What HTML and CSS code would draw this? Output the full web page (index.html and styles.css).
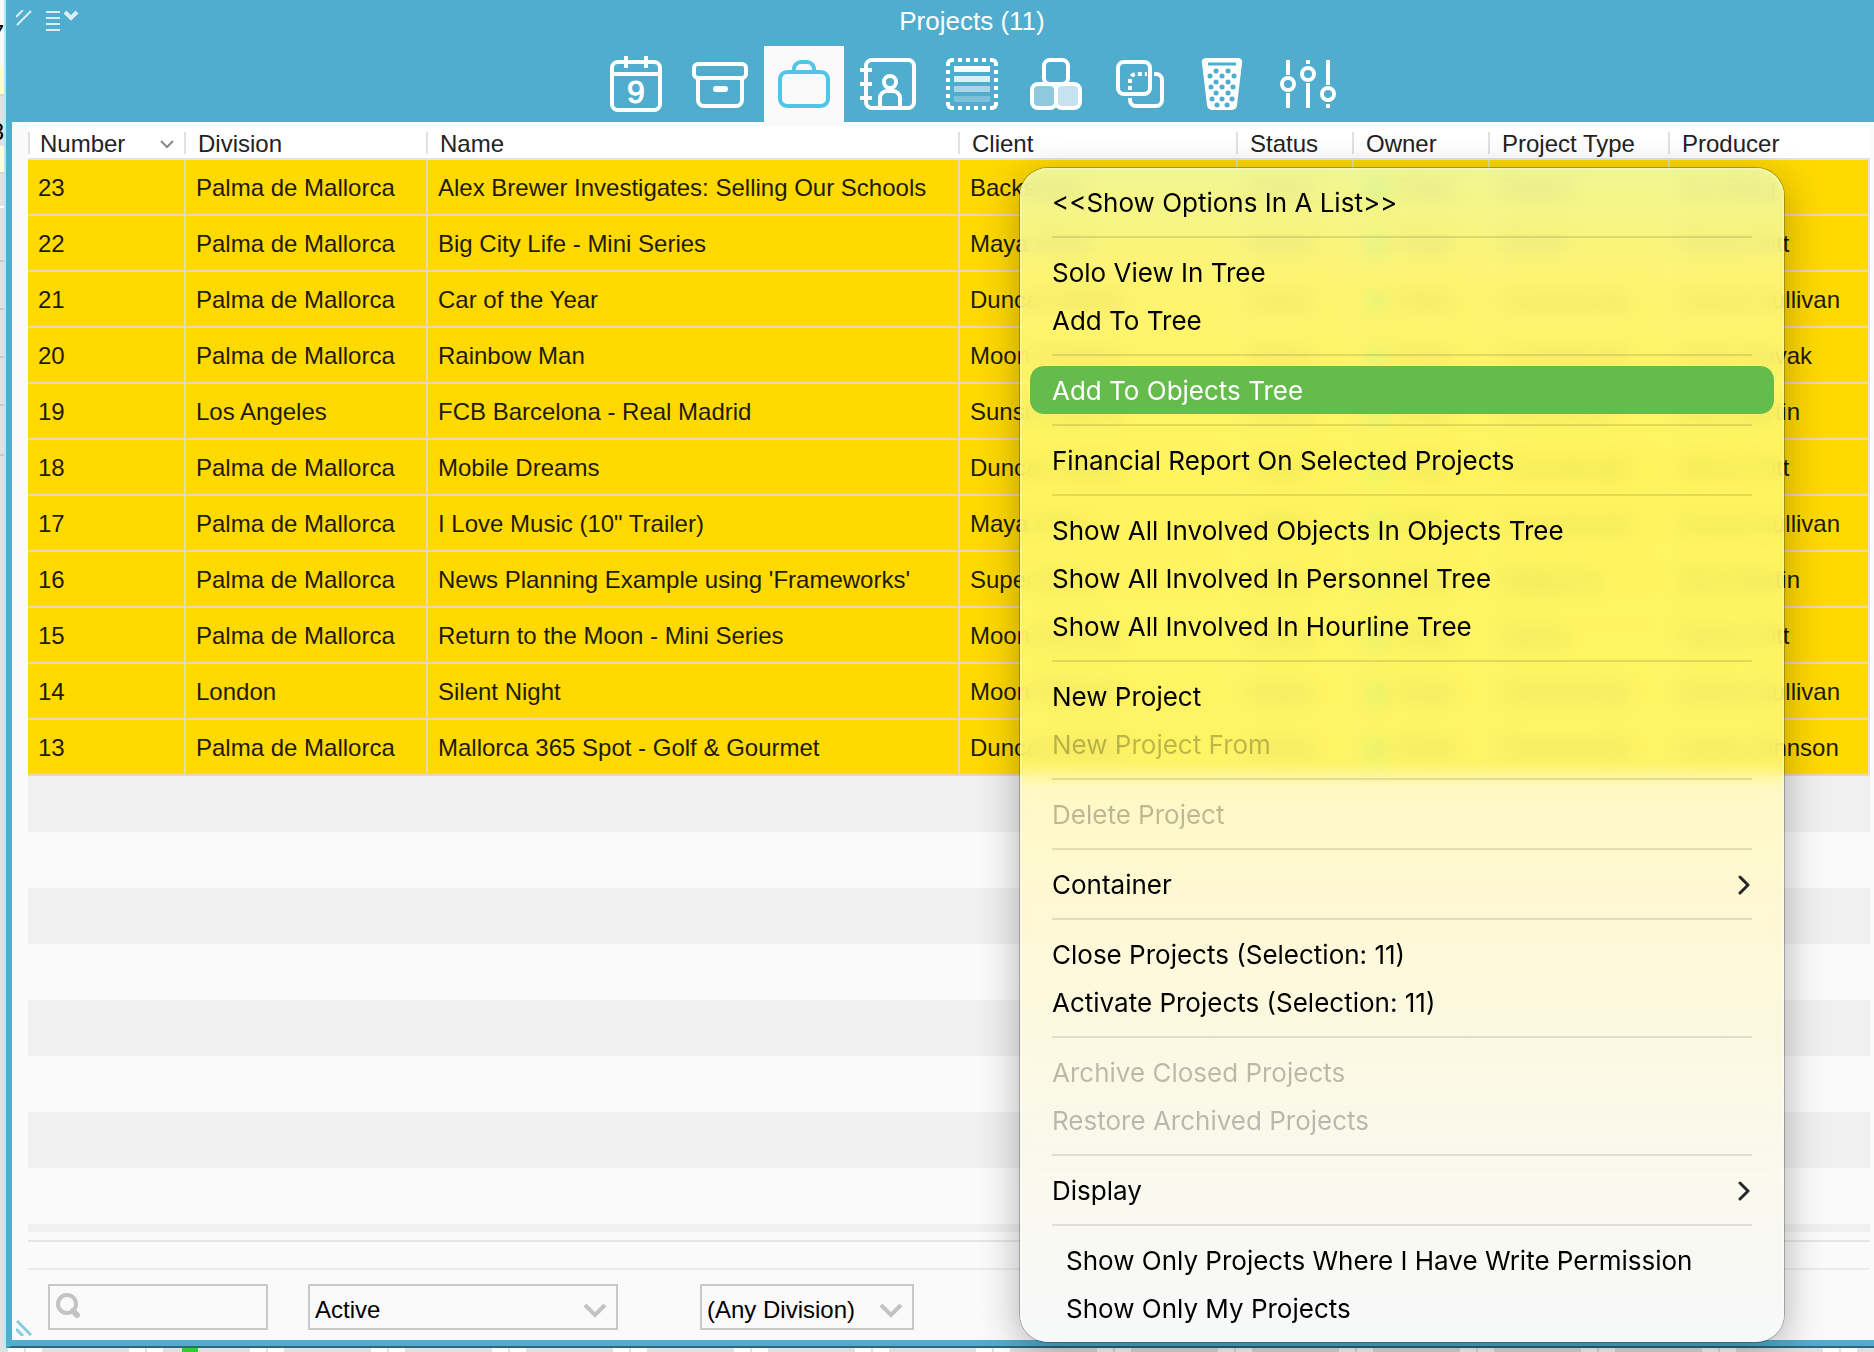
FILE: index.html
```
<!DOCTYPE html>
<html lang="en">
  <head>
    <meta charset="UTF-8" />
    <meta name="viewport" content="width=device-width, initial-scale=1.0" />
    <title>Projects (11)</title>
    <link rel="stylesheet" href="styles.css">
  </head>
  <body>
    <div class="desktop">
      <aside class="ruler"><span>7</span><span>8</span></aside>

      <main class="window">
        <header class="titlebar">
          <div class="tools">
            <button aria-label="Resize">
              <svg width="16" height="16" viewBox="0 0 16 16"><path d="M0 7 7 0M1 15 15 1" /></svg>
            </button>
            <button aria-label="Window menu">
              <svg width="34" height="22" viewBox="0 0 34 22">
                <path d="M1 2H15M1 8H15M1 14H15M1 20H15" />
                <path class="thick" d="M20 2 26 8 32 2" />
              </svg>
            </button>
          </div>
          <div class="heading">
            <h1>Projects (11)</h1>
            <nav class="tabs">
              <button aria-label="Calendar">
                <svg viewBox="0 0 80 76">
                  <rect x="16" y="16" width="48" height="48" rx="6" />
                  <path d="M16 28H64M30 10V22M50 10V22" />
                  <text x="31" y="57">9</text>
                </svg>
              </button>
              <button aria-label="Archive">
                <svg viewBox="0 0 80 76">
                  <rect x="14" y="18" width="52" height="14" rx="4" />
                  <path d="M18 32V54a6 6 0 0 0 6 6H56a6 6 0 0 0 6-6V32" />
                  <path d="M36 43H45" stroke-width="6" stroke-linecap="round" />
                </svg>
              </button>
              <button class="active" aria-label="Projects">
                <svg viewBox="0 0 80 76">
                  <rect x="16" y="26" width="48" height="34" rx="7" />
                  <path d="M30 26V23a7 7 0 0 1 7-7h6a7 7 0 0 1 7 7V26" />
                </svg>
              </button>
              <button aria-label="Contacts">
                <svg viewBox="0 0 80 76">
                  <rect x="18" y="14" width="48" height="48" rx="6" />
                  <path d="M12 24H24M12 38H24M12 52H24" />
                  <circle cx="42" cy="36" r="6" />
                  <path d="M32 62V52a7 7 0 0 1 7-7h6a7 7 0 0 1 7 7V62" />
                </svg>
              </button>
              <button aria-label="List">
                <svg viewBox="0 0 80 76">
                  <path d="M16 20V18a4 4 0 0 1 4-4h2M58 14h2a4 4 0 0 1 4 4v2M64 56v2a4 4 0 0 1-4 4h-2M22 62h-2a4 4 0 0 1-4-4v-2" />
                  <path d="M26 14H54M26 62H54M16 24V52M64 24V52" stroke-dasharray="4 4" />
                  <path d="M22 23H58" stroke-width="6" />
                  <path d="M22 33H58" stroke-width="6" opacity=".8" />
                  <path d="M22 43H58" stroke-width="6" opacity=".5" />
                  <path d="M22 53H58" stroke-width="6" opacity=".25" />
                </svg>
              </button>
              <button aria-label="Resources">
                <svg viewBox="0 0 80 76">
                  <rect x="28" y="14" width="24" height="24" rx="6" />
                  <rect x="16" y="38" width="24" height="24" rx="6" fill="#8fc9de" />
                  <rect x="40" y="38" width="24" height="24" rx="6" fill="#c5e3ee" />
                </svg>
              </button>
              <button aria-label="Copies">
                <svg viewBox="0 0 80 76">
                  <rect x="18" y="16" width="32" height="32" rx="6" />
                  <path d="M54 28h2a6 6 0 0 1 6 6V54a6 6 0 0 1-6 6H36a6 6 0 0 1-6-6V52" />
                  <path d="M30 44V34a6 6 0 0 1 6-6H47" stroke-dasharray="4 3" />
                </svg>
              </button>
              <button aria-label="Trash">
                <svg viewBox="0 0 80 76">
                  <path d="M22 14H54a2 2 0 0 1 2 3L51 59a3 3 0 0 1-3 3H28a3 3 0 0 1-3-3L20 17a2 2 0 0 1 2-3Z" fill="#fff" />
                  <path class="hole" d="M24 18H52" />
                  <path class="dots" d="M32 25h.1M44 25h.1M26 30h.1M38 30h.1M50 30h.1M32 36h.1M44 36h.1M27 41h.1M38 41h.1M49 41h.1M32 47h.1M44 47h.1M28 53h.1M38 53h.1M48 53h.1M33 59h.1M43 59h.1" />
                </svg>
              </button>
              <button aria-label="Settings">
                <svg viewBox="0 0 80 76">
                  <path d="M20 14V29M20 47V62M40 14V18M40 37V62M60 14V39M60 58V62" />
                  <circle cx="20" cy="38" r="6" />
                  <circle cx="40" cy="28" r="6" />
                  <circle cx="60" cy="48" r="6" />
                </svg>
              </button>
            </nav>
          </div>
        </header>

        <section class="list">
          <table>
            <colgroup>
              <col class="c-number"><col class="c-division"><col class="c-name"><col class="c-client">
              <col class="c-status"><col class="c-owner"><col class="c-type"><col>
            </colgroup>
            <thead>
              <tr>
                <th>Number
                  <svg class="sort" width="14" height="9" viewBox="0 0 14 9"><path d="M1 1 7 7 13 1" /></svg>
                </th>
                <th>Division</th><th>Name</th><th>Client</th><th>Status</th><th>Owner</th><th>Project Type</th><th>Producer</th>
              </tr>
            </thead>
            <tbody id="rows"></tbody>
          </table>
          <div class="stripes"></div>
        </section>

        <div class="status"></div>

        <form class="filters">
          <label class="field search">
            <svg width="26" height="28" viewBox="0 0 26 28"><circle cx="12" cy="12" r="9" /><path class="handle" d="M18 19 22 23" /></svg>
            <input type="text" aria-label="Search">
          </label>
          <label class="field state">
            <select aria-label="State"><option>Active</option><option>Closed</option></select>
            <svg class="arrow" width="24" height="16" viewBox="0 0 24 16"><path d="M2 2 12 12 22 2" /></svg>
          </label>
          <label class="field division">
            <select aria-label="Division"><option>(Any Division)</option><option>Palma de Mallorca</option><option>London</option></select>
            <svg class="arrow" width="24" height="16" viewBox="0 0 24 16"><path d="M2 2 12 12 22 2" /></svg>
          </label>
        </form>
        <svg class="grip" width="16" height="16" viewBox="0 0 16 16"><path d="M1 1 15 15M0 9 7 16" /></svg>
      </main>
    </div>
    <div class="timeline"></div>

    <div class="menu" role="menu">
      <button role="menuitem">&lt;&lt;Show Options In A List&gt;&gt;</button>
      <hr>
      <button role="menuitem">Solo View In Tree</button>
      <button role="menuitem">Add To Tree</button>
      <hr>
      <button role="menuitem" class="selected">Add To Objects Tree</button>
      <hr>
      <button role="menuitem">Financial Report On Selected Projects</button>
      <hr>
      <button role="menuitem">Show All Involved Objects In Objects Tree</button>
      <button role="menuitem">Show All Involved In Personnel Tree</button>
      <button role="menuitem">Show All Involved In Hourline Tree</button>
      <hr>
      <button role="menuitem">New Project</button>
      <button role="menuitem" disabled>New Project From</button>
      <hr>
      <button role="menuitem" disabled>Delete Project</button>
      <hr>
      <button role="menuitem">Container
        <svg width="16" height="22" viewBox="0 0 16 22"><path d="M4 4 12 12 4 20" /></svg>
      </button>
      <hr>
      <button role="menuitem">Close Projects (Selection: 11)</button>
      <button role="menuitem">Activate Projects (Selection: 11)</button>
      <hr>
      <button role="menuitem" disabled>Archive Closed Projects</button>
      <button role="menuitem" disabled>Restore Archived Projects</button>
      <hr>
      <button role="menuitem">Display
        <svg width="16" height="22" viewBox="0 0 16 22"><path d="M4 4 12 12 4 20" /></svg>
      </button>
      <hr>
      <button role="menuitem" class="indent">Show Only Projects Where I Have Write Permission</button>
      <button role="menuitem" class="indent">Show Only My Projects</button>
    </div>

    <script src="script.js"></script>
  </body>
</html>
```
FILE: styles.css
```
:root {
  --blue: #50adcd;
  --panel: #fafafa;
  --yellow: #ffd900;
  --grid: #e3dcab;
  --control: #c8c8c8;
}

* {
  box-sizing: border-box;
}

body {
  margin: 0;
  height: 100vh;
  display: flex;
  flex-direction: column;
  overflow: hidden;
  background: #e1e1e1;
  font-family: "Liberation Sans", Arial, sans-serif;
  font-size: 24px;
  color: #000;
}

button {
  padding: 0;
  border: none;
  background: none;
  font: inherit;
  color: inherit;
}

svg {
  display: block;
  fill: none;
  stroke: #fff;
}

.desktop {
  flex: 1;
  display: flex;
  min-height: 0;
}

/* sliver of the hour grid behind the window */
.ruler {
  width: 6px;
  border-right: 2px solid #a5f0fa;
  background: linear-gradient(#fafafa 65px, #ffffc3 65px, #ffffc3 94px, #d5d5d5 94px, #d5d5d5 96px,
    #e1e1e1 96px, #e1e1e1 146px, #ffffdd 146px, #ffffdd 172px, #d5d5d5 172px, #d5d5d5 174px,
    #e1e1e1 174px, #e1e1e1 206px, #fff 206px, #fff 208px, #e1e1e1 208px, #e1e1e1 260px,
    #c8c8c8 260px, #c8c8c8 262px, #e1e1e1 262px, #e1e1e1 308px, #c8c8c8 308px, #c8c8c8 310px,
    #e1e1e1 310px, #e1e1e1 356px, #c8c8c8 356px, #c8c8c8 358px, #e1e1e1 358px, #e1e1e1 404px,
    #c8c8c8 404px, #c8c8c8 406px, #e1e1e1 406px, #e1e1e1 454px, #c8c8c8 454px, #c8c8c8 456px,
    #e1e1e1 456px);
  overflow: hidden;
  direction: rtl;
  padding-top: 20px;
}

.ruler span {
  display: block;
  height: 98px;
}

.window {
  position: relative;
  flex: 1;
  min-width: 0;
  display: flex;
  flex-direction: column;
  background: var(--panel);
  border-left: 6px solid var(--blue);
  border-bottom: 2px solid #2f6678;
  box-shadow: inset 0 -6px var(--blue);
  padding-bottom: 6px;
}

.titlebar {
  display: flex;
  height: 122px;
  margin-left: -6px;
  background: var(--blue);
  color: #fff;
}

.tools {
  width: 64px;
  padding: 10px 0 0 10px;
  display: flex;
  align-items: flex-start;
  gap: 13px;
  opacity: 0.8;
}

.tools svg {
  stroke-width: 2;
}

.tools .thick {
  stroke-width: 4;
}

.heading {
  flex: 1;
  display: flex;
  flex-direction: column;
  align-items: center;
}

h1 {
  margin: 0;
  height: 46px;
  padding-top: 5px;
  font-size: 26px;
  line-height: 32px;
  font-weight: normal;
}

.tabs {
  display: flex;
  gap: 4px;
}

.tabs svg {
  width: 80px;
  height: 76px;
  stroke-width: 4;
}

.tabs text {
  font-size: 32px;
  fill: #fff;
  stroke-width: 1;
}

.tabs .active {
  background: var(--panel);
}

.tabs .active svg {
  stroke: #50c5e7;
}

.tabs .hole {
  stroke: var(--blue);
  stroke-width: 3;
}

.tabs .dots {
  stroke: var(--blue);
  stroke-width: 5;
  stroke-linecap: round;
}

.list {
  flex: 1;
  display: flex;
  flex-direction: column;
  margin: 4px 4px 8px 16px;
}

table {
  width: 100%;
  table-layout: fixed;
  border-collapse: separate;
  border-spacing: 0;
}

.c-number { width: 156px; }
.c-division { width: 242px; }
.c-name { width: 532px; }
.c-client { width: 278px; }
.c-status { width: 116px; }
.c-owner { width: 136px; }
.c-type { width: 180px; }

th {
  position: relative;
  height: 34px;
  padding: 4px 0 0 14px;
  border-bottom: 2px solid #e4e4e4;
  background: linear-gradient(#e1e1e1, #e1e1e1) 0 6px / 2px 22px no-repeat, #fff;
  color: #222;
  font-weight: normal;
  line-height: 28px;
  text-align: left;
  white-space: nowrap;
}

th:first-child {
  padding-left: 12px;
}

.sort {
  position: absolute;
  right: 10px;
  top: 14px;
  stroke: #888;
  stroke-width: 2;
}

td {
  height: 56px;
  padding: 2px 0 0 10px;
  background: var(--yellow);
  border-left: 2px solid var(--grid);
  border-bottom: 2px solid var(--grid);
  color: #1f1b00;
  white-space: nowrap;
  overflow: hidden;
}

td:first-child {
  border-left: none;
}

td:last-child {
  border-right: 2px solid #e1e1e1;
}

.dot {
  display: inline-block;
  width: 16px;
  height: 24px;
  margin: 0 14px 0 4px;
  border-radius: 8px;
  background: #00d060;
  vertical-align: middle;
}

.stripes {
  flex: 1;
  background: repeating-linear-gradient(#f0f0f0 0, #f0f0f0 56px, var(--panel) 56px, var(--panel) 112px);
}

.status {
  height: 30px;
  margin: 0 4px 0 16px;
  border-top: 2px solid #e6e6e6;
  border-bottom: 2px solid #ececec;
}

.filters {
  display: flex;
  padding: 14px 0 10px 36px;
}

.field {
  position: relative;
  height: 46px;
}

.field input,
.field select {
  appearance: none;
  width: 100%;
  height: 100%;
  border: 2px solid var(--control);
  border-radius: 0;
  background: var(--panel);
  padding: 4px 5px 0;
  font: inherit;
  color: #000;
}

.field input {
  padding-left: 36px;
}

.field svg {
  position: absolute;
  stroke: #c3c3c3;
  stroke-width: 4;
}

.field .handle {
  stroke-width: 6;
  stroke-linecap: round;
}

.search { width: 220px; }
.state { width: 310px; margin-left: 40px; }
.division { width: 214px; margin-left: 82px; }

.search svg {
  left: 7px;
  top: 8px;
}

.field .arrow {
  right: 11px;
  top: 19px;
}

.grip {
  position: absolute;
  left: 4px;
  bottom: 10px;
  stroke: #8accdf;
  stroke-width: 3;
}

.timeline {
  height: 4px;
  background: linear-gradient(#2ecc40, #2ecc40) 182px 0 / 16px 4px no-repeat,
    repeating-linear-gradient(90deg, #e1e1e1 0, #e1e1e1 8px, #fff 8px, #fff 24px, #e1e1e1 24px,
    #e1e1e1 26px, #fff 26px, #fff 42px, #e1e1e1 42px, #e1e1e1 121px);
}

.menu {
  position: absolute;
  left: 1020px;
  top: 168px;
  width: 764px;
  padding: 10px;
  border-radius: 28px;
  font-family: Inter, sans-serif;
  font-size: 26px;
  background: linear-gradient(rgba(238, 250, 170, 0.86) 0, rgba(255, 249, 132, 0.84) 120px,
    rgba(255, 249, 110, 0.84) 300px, rgba(255, 249, 120, 0.84) 596px, rgba(255, 249, 190, 0.88) 620px,
    rgba(255, 248, 210, 0.88) 760px, rgba(250, 249, 232, 0.88) 960px, rgba(247, 248, 248, 0.95) 1150px);
  backdrop-filter: blur(10px);
  box-shadow: 0 0 0 1px rgba(0, 0, 0, 0.25), inset 0 0 3px #fff, 0 10px 40px rgba(0, 0, 0, 0.3);
}

.menu button {
  display: flex;
  justify-content: space-between;
  align-items: center;
  width: 100%;
  height: 48px;
  padding: 0 22px;
  border-radius: 14px;
  text-align: left;
}

.menu .selected {
  background: #65bb4c;
  color: #fff;
}

.menu button:disabled {
  color: rgba(0, 0, 0, 0.26);
}

.menu .indent {
  padding-left: 36px;
}

.menu svg {
  stroke: #262626;
  stroke-width: 3;
  stroke-linecap: round;
  stroke-linejoin: round;
}

.menu hr {
  height: 2px;
  margin: 10px 22px;
  border: none;
  background: rgba(0, 0, 0, 0.11);
}
```
FILE: script.js
```
const projects = [
  [23, "Palma de Mallorca", "Alex Brewer Investigates: Selling Our Schools", "Backstage", "Active", "Peter", "Report", "Jon Berg"],
  [22, "Palma de Mallorca", "Big City Life - Mini Series", "Maya Films", "Active", "Peter", "Series", "Simon Pitt"],
  [21, "Palma de Mallorca", "Car of the Year", "Duncan Media", "Active", "Peter", "Commercial", "Emma Sullivan"],
  [20, "Palma de Mallorca", "Rainbow Man", "Moon Pictures", "Active", "Peter", "Commercial", "Peter Novak"],
  [19, "Los Angeles", "FCB Barcelona - Real Madrid", "Sunset Sports", "Active", "Peter", "Live Event", "Nick Martin"],
  [18, "Palma de Mallorca", "Mobile Dreams", "Duncan Media", "Active", "Peter", "Commercial", "Simon Pitt"],
  [17, "Palma de Mallorca", "I Love Music (10\" Trailer)", "Maya Films", "Active", "Peter", "Commercial", "Emma Sullivan"],
  [16, "Palma de Mallorca", "News Planning Example using 'Frameworks'", "Super News", "Active", "Peter", "Magazine", "Nick Martin"],
  [15, "Palma de Mallorca", "Return to the Moon - Mini Series", "Moon Pictures", "Active", "Peter", "Series", "Simon Pitt"],
  [14, "London", "Silent Night", "Moon Pictures", "Active", "Peter", "Commercial", "Emma Sullivan"],
  [13, "Palma de Mallorca", "Mallorca 365 Spot - Golf & Gourmet", "Duncan Media", "Active", "Peter", "Commercial", "Laura Johnson"],
];

const rows = document.getElementById("rows");

projects.forEach((project) => {
  const tr = rows.insertRow();
  project.forEach((value, i) => {
    const td = tr.insertCell();
    // owner column has a colour marker in front of the name
    if (i === 5) {
      const dot = document.createElement("span");
      dot.className = "dot";
      td.append(dot);
    }
    td.append(value);
  });
});
```
